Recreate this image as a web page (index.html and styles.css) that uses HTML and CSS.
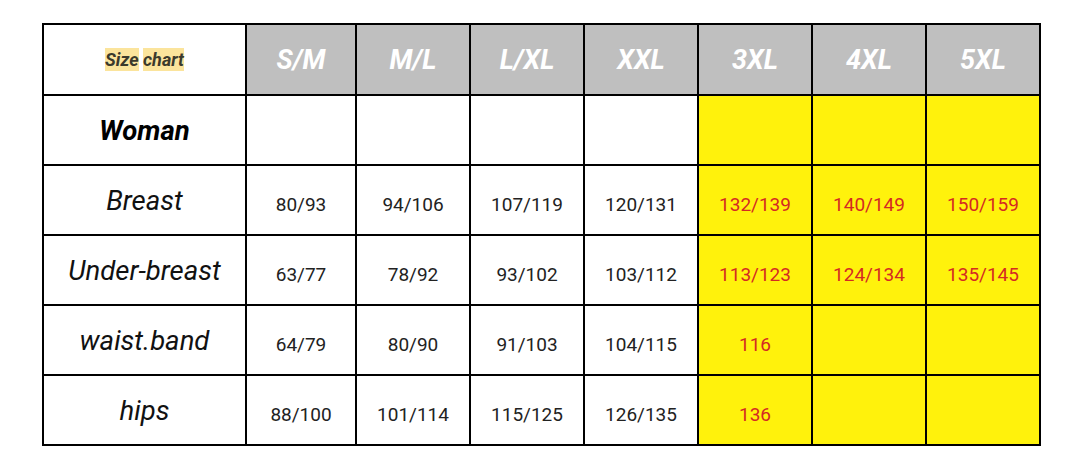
FILE: index.html
```html
<!DOCTYPE html>
<html>
<head>
<meta charset="utf-8">
<link rel="stylesheet" href="styles.css">
</head>
<body>
<table class="chart">
  <colgroup>
    <col class="c-label"><col class="c-sm"><col class="c-n"><col class="c-n"><col class="c-n"><col class="c-n"><col class="c-n"><col class="c-n">
  </colgroup>
  <tr class="head">
    <td class="corner"><span class="hl">Size</span> <span class="hl">chart</span></td>
    <th>S/M</th><th>M/L</th><th>L/XL</th><th>XXL</th><th>3XL</th><th>4XL</th><th>5XL</th>
  </tr>
  <tr>
    <td class="label strong">Woman</td>
    <td></td><td></td><td></td><td></td><td class="y"></td><td class="y"></td><td class="y"></td>
  </tr>
  <tr>
    <td class="label">Breast</td>
    <td class="num">80/93</td><td class="num">94/106</td><td class="num">107/119</td><td class="num">120/131</td>
    <td class="num y r">132/139</td><td class="num y r">140/149</td><td class="num y r">150/159</td>
  </tr>
  <tr>
    <td class="label">Under-breast</td>
    <td class="num">63/77</td><td class="num">78/92</td><td class="num">93/102</td><td class="num">103/112</td>
    <td class="num y r">113/123</td><td class="num y r">124/134</td><td class="num y r">135/145</td>
  </tr>
  <tr>
    <td class="label">waist.band</td>
    <td class="num">64/79</td><td class="num">80/90</td><td class="num">91/103</td><td class="num">104/115</td>
    <td class="num y r">116</td><td class="y"></td><td class="y"></td>
  </tr>
  <tr>
    <td class="label">hips</td>
    <td class="num">88/100</td><td class="num">101/114</td><td class="num">115/125</td><td class="num">126/135</td>
    <td class="num y r">136</td><td class="y"></td><td class="y"></td>
  </tr>
</table>
</body>
</html>
```

FILE: styles.css
```css
html, body {
  margin: 0;
  padding: 0;
  background: #ffffff;
}
body {
  padding: 23px 0 0 42px;
  font-family: Roboto, "Liberation Sans", sans-serif;
}
.chart {
  border-collapse: collapse;
  table-layout: fixed;
  width: 999px;
  border: 2px solid #000;
}
.c-label { width: 203px; }
.c-sm { width: 110px; }
.c-n { width: 114px; }
.chart tr {
  height: 70px;
}
.chart tr.head {
  height: 71px;
}
.chart td, .chart th {
  border: 2px solid #000;
  padding: 0;
  text-align: center;
  vertical-align: middle;
}
.head th {
  background: #bfbfbf;
  color: #ffffff;
  font-size: 27px;
  font-weight: 700;
  font-style: italic;
}
.corner {
  font-size: 18px;
  font-weight: 700;
  font-style: italic;
  color: #3b3a2c;
}
.hl {
  background: #fbe49c;
  padding: 1px 0;
}
.label {
  font-size: 27.5px;
  font-style: italic;
  color: #111;
}
.label.strong {
  font-weight: 700;
  color: #000;
}
.num {
  font-size: 19px;
  color: #222;
  padding-top: 9px !important;
}
.y {
  background: #fff20c;
}
.r {
  color: #d42a22;
}
```
